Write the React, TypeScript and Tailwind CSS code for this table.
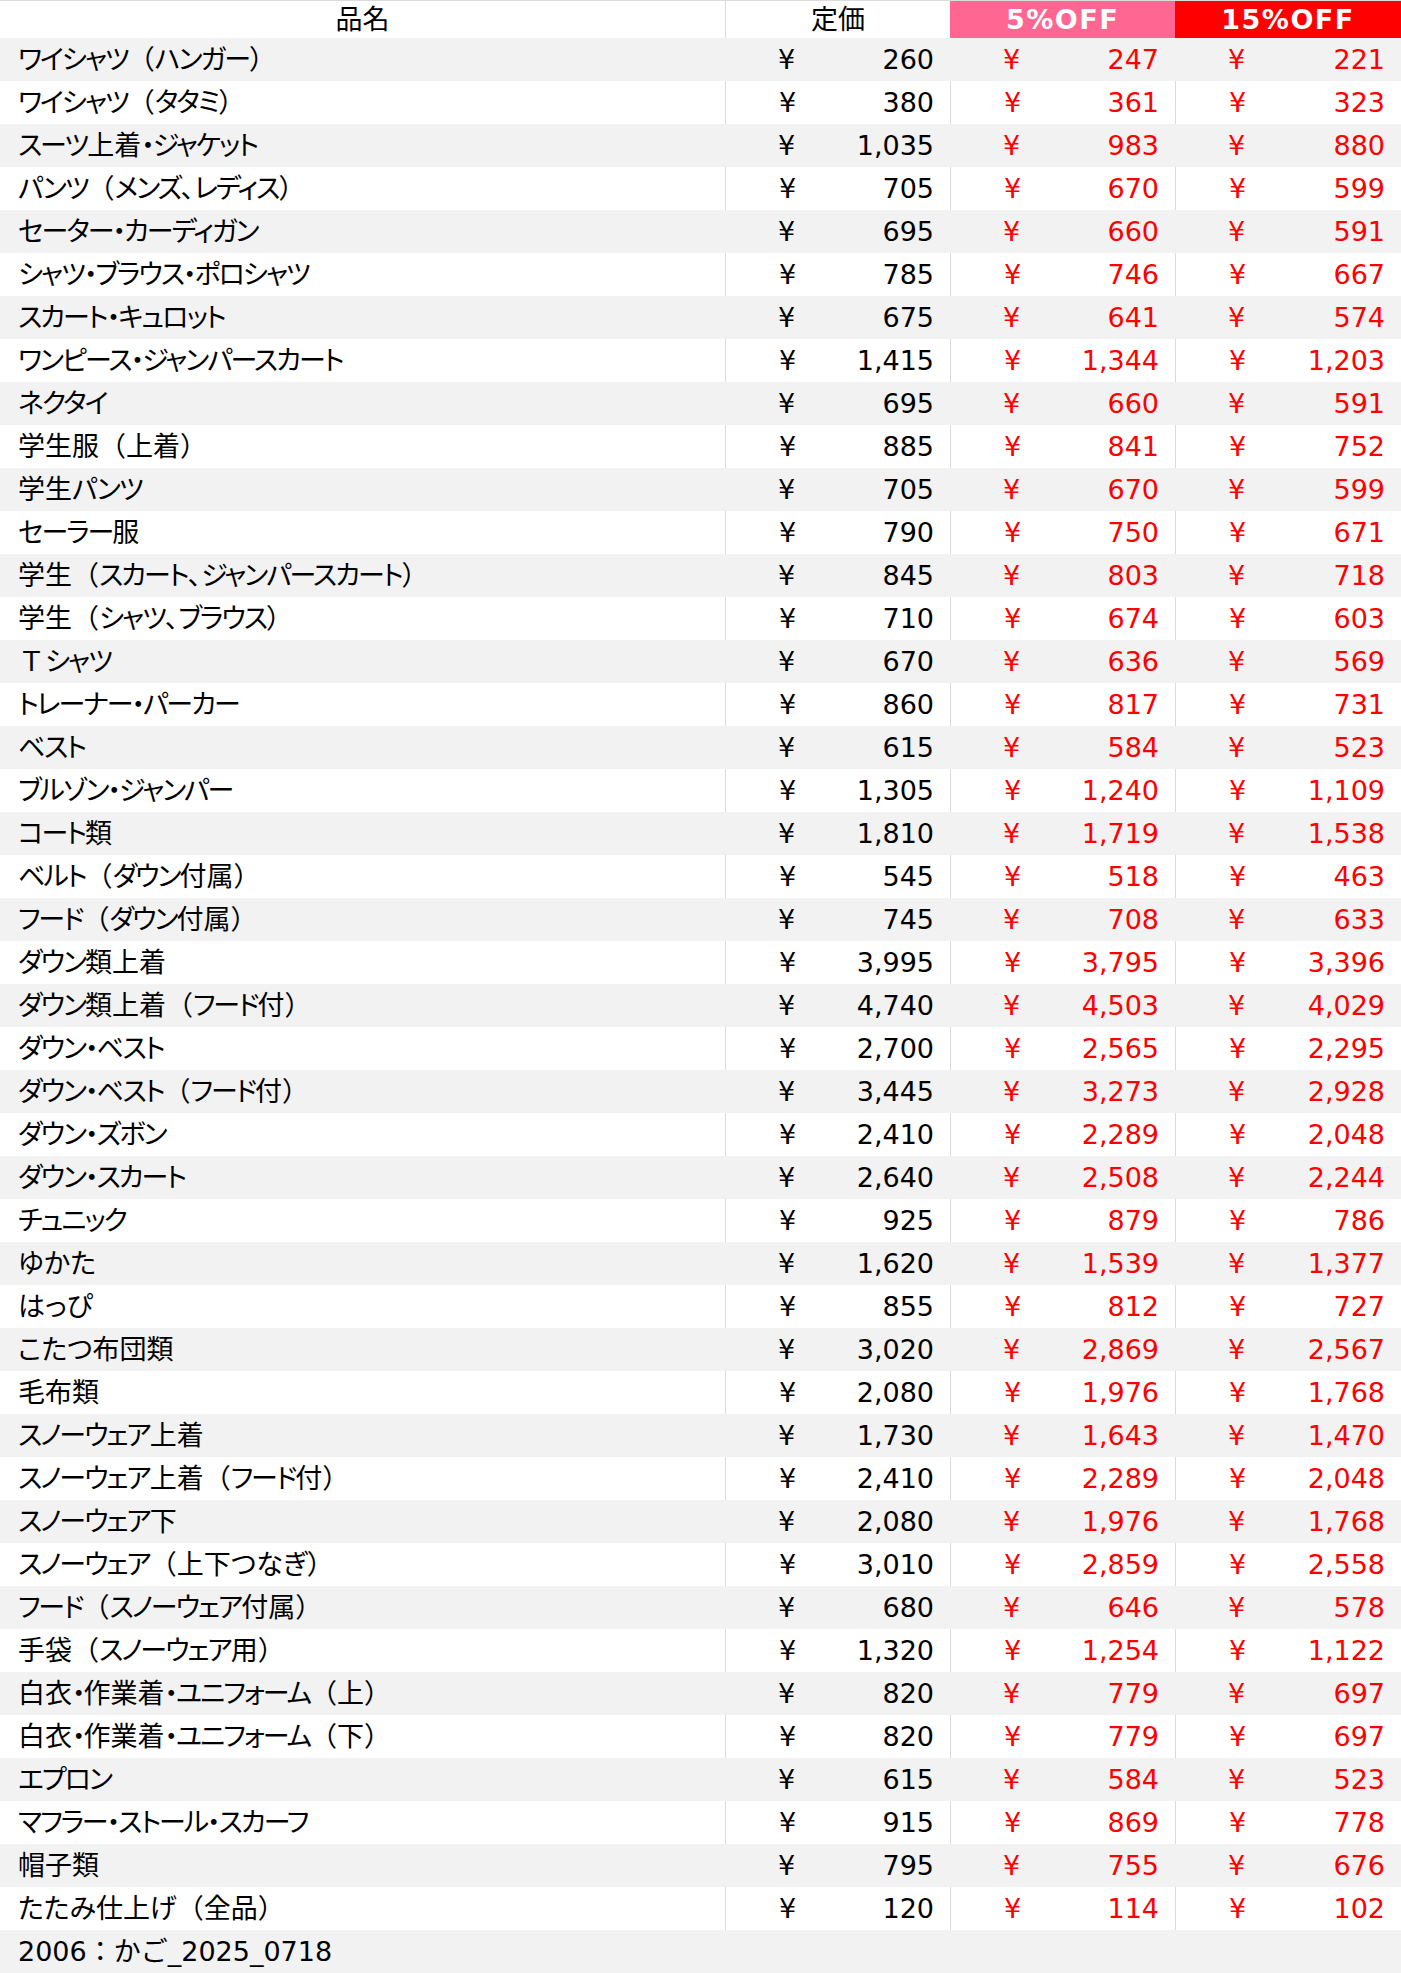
import React from 'react';

type Item = [string, string, string, string];

// 品名, 定価, 5%OFF, 15%OFF
const ITEMS: Item[] = [
  ['ワイシャツ（ハンガー）', '260', '247', '221'],
  ['ワイシャツ（タタミ）', '380', '361', '323'],
  ['スーツ上着・ジャケット', '1,035', '983', '880'],
  ['パンツ（メンズ、レディス）', '705', '670', '599'],
  ['セーター・カーディガン', '695', '660', '591'],
  ['シャツ・ブラウス・ポロシャツ', '785', '746', '667'],
  ['スカート・キュロット', '675', '641', '574'],
  ['ワンピース・ジャンパースカート', '1,415', '1,344', '1,203'],
  ['ネクタイ', '695', '660', '591'],
  ['学生服（上着）', '885', '841', '752'],
  ['学生パンツ', '705', '670', '599'],
  ['セーラー服', '790', '750', '671'],
  ['学生（スカート、ジャンパースカート）', '845', '803', '718'],
  ['学生（シャツ、ブラウス）', '710', '674', '603'],
  ['Ｔシャツ', '670', '636', '569'],
  ['トレーナー・パーカー', '860', '817', '731'],
  ['ベスト', '615', '584', '523'],
  ['ブルゾン・ジャンパー', '1,305', '1,240', '1,109'],
  ['コート類', '1,810', '1,719', '1,538'],
  ['ベルト（ダウン付属）', '545', '518', '463'],
  ['フード（ダウン付属）', '745', '708', '633'],
  ['ダウン類上着', '3,995', '3,795', '3,396'],
  ['ダウン類上着（フード付）', '4,740', '4,503', '4,029'],
  ['ダウン・ベスト', '2,700', '2,565', '2,295'],
  ['ダウン・ベスト（フード付）', '3,445', '3,273', '2,928'],
  ['ダウン・ズボン', '2,410', '2,289', '2,048'],
  ['ダウン・スカート', '2,640', '2,508', '2,244'],
  ['チュニック', '925', '879', '786'],
  ['ゆかた', '1,620', '1,539', '1,377'],
  ['はっぴ', '855', '812', '727'],
  ['こたつ布団類', '3,020', '2,869', '2,567'],
  ['毛布類', '2,080', '1,976', '1,768'],
  ['スノーウェア上着', '1,730', '1,643', '1,470'],
  ['スノーウェア上着（フード付）', '2,410', '2,289', '2,048'],
  ['スノーウェア下', '2,080', '1,976', '1,768'],
  ['スノーウェア（上下つなぎ）', '3,010', '2,859', '2,558'],
  ['フード（スノーウェア付属）', '680', '646', '578'],
  ['手袋（スノーウェア用）', '1,320', '1,254', '1,122'],
  ['白衣・作業着・ユニフォーム（上）', '820', '779', '697'],
  ['白衣・作業着・ユニフォーム（下）', '820', '779', '697'],
  ['エプロン', '615', '584', '523'],
  ['マフラー・ストール・スカーフ', '915', '869', '778'],
  ['帽子類', '795', '755', '676'],
  ['たたみ仕上げ（全品）', '120', '114', '102'],
];

const COLS = 'grid grid-cols-[725px_225px_225px_226px]';

// カタカナは詰め気味、括弧と全角Ｔは全角幅のまま
const Name = ({ text }: { text: string }) => {
  const parts = text.match(/[\u30A0-\u30FF]+|[（）Ｔ]|[^\u30A0-\u30FF（）Ｔ]+/g) || [];
  return (
    <>
      {parts.map((p, i) =>
        /[\u30A0-\u30FF]/.test(p) ? (
          <span key={i} className="tracking-[-2px]">{p}</span>
        ) : /[（）Ｔ]/.test(p) ? (
          <span key={i} className="[font-feature-settings:normal]">{p}</span>
        ) : (
          <span key={i}>{p}</span>
        )
      )}
    </>
  );
};

const Yen = ({ value, red, line }: { value: string; red?: boolean; line: boolean }) => (
  <div
    className={`flex items-center justify-between pl-[53px] pr-[16px] ${line ? 'border-l border-[#dadada]' : ''} ${red ? 'text-[#f00]' : 'text-black'}`}
  >
    <span>¥</span>
    <span>{value}</span>
  </div>
);

export default function App() {
  return (
    <div className="w-[1401px] bg-white text-[27px] leading-none text-black font-['DejaVu_Sans','Noto_Sans_CJK_JP',sans-serif]">
      {/* ヘッダー */}
      <div className={`${COLS} h-[38px] border-t border-[#dcdcdc]`}>
        <div className="flex items-center justify-center">品名</div>
        <div className="flex items-center justify-center border-l border-[#dadada]">定価</div>
        <div className="flex items-center justify-center bg-[#ff6692] font-bold tracking-[1.5px] text-white">5%OFF</div>
        <div className="flex items-center justify-center bg-[#ff0000] font-bold tracking-[1.5px] text-white">15%OFF</div>
      </div>

      {ITEMS.map(([name, price, off5, off15], i) => {
        const shaded = i % 2 === 0;
        return (
          <div key={name + i} className={`${COLS} h-[43px] ${shaded ? 'bg-[#f2f2f2]' : 'bg-white'}`}>
            <div className="flex items-center pl-[18px] whitespace-nowrap [font-feature-settings:'palt']">
              <Name text={name} />
            </div>
            <Yen value={price} line={!shaded} />
            <Yen value={off5} red line={!shaded} />
            <Yen value={off15} red line={!shaded} />
          </div>
        );
      })}

      <div className="flex h-[43px] items-center bg-[#f2f2f2] pl-[18px]">2006：かご_2025_0718</div>
    </div>
  );
}
